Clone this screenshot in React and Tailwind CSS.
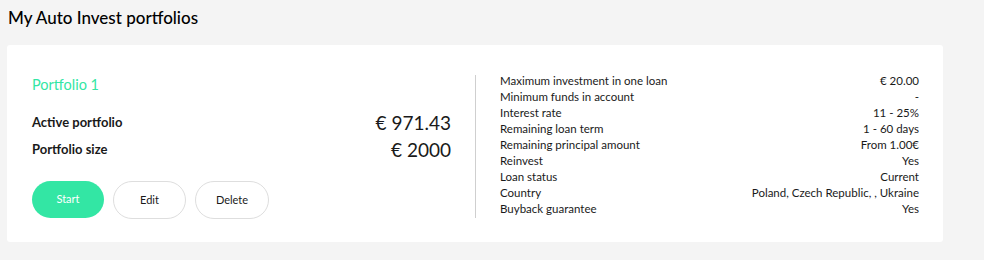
import React from 'react';

const details = [
  ['Maximum investment in one loan', '€ 20.00'],
  ['Minimum funds in account', '-'],
  ['Interest rate', '11 - 25%'],
  ['Remaining loan term', '1 - 60 days'],
  ['Remaining principal amount', 'From 1.00€'],
  ['Reinvest', 'Yes'],
  ['Loan status', 'Current'],
  ['Country', 'Poland, Czech Republic, , Ukraine'],
  ['Buyback guarantee', 'Yes'],
];

export default function App() {
  return (
    <div className="w-[984px] h-[260px] bg-[#f4f4f4] text-[#1a1a1a] font-['Lato','Open_Sans',sans-serif] overflow-hidden">
      <h1 className="pl-[8px] pt-[7px] h-[45px] text-[17px] leading-[22px] font-medium text-black">
        My Auto Invest portfolios
      </h1>

      <div className="ml-[7px] w-[936px] h-[197px] bg-white rounded-[3px] flex pl-[25px] pr-[24px] pt-[28px]">
        {/* left: portfolio summary */}
        <div className="w-[419px] flex flex-col">
          <div className="mt-[2px] text-[14.5px] leading-[20px] text-[#33e6a4]">Portfolio 1</div>

          <div className="mt-[18px] flex items-center justify-between h-[20px]">
            <span className="text-[13px] font-bold">Active portfolio</span>
            <span className="text-[19px]">€ 971.43</span>
          </div>
          <div className="mt-[7px] flex items-center justify-between h-[20px]">
            <span className="text-[13px] font-bold">Portfolio size</span>
            <span className="text-[19px]">€ 2000</span>
          </div>

          <div className="mt-[21px] flex gap-[9px]">
            <button className="w-[72px] h-[37px] rounded-full bg-[#33e6a4] text-white text-[11px]">
              Start
            </button>
            <button className="w-[73px] h-[38px] rounded-full border border-[#dedede] bg-white text-[11px]">
              Edit
            </button>
            <button className="w-[74px] h-[38px] rounded-full border border-[#dedede] bg-white text-[11px]">
              Delete
            </button>
          </div>
        </div>

        <div className="ml-[24px] mt-[2px] w-px h-[143px] bg-[#cfcfcf]" />

        {/* right: settings list */}
        <div className="ml-[24px] flex-1 flex flex-col">
          {details.map(([label, value]) => (
            <div key={label} className="flex justify-between h-[16px] items-center text-[11.5px]">
              <span>{label}</span>
              <span>{value}</span>
            </div>
          ))}
        </div>
      </div>
    </div>
  );
}
